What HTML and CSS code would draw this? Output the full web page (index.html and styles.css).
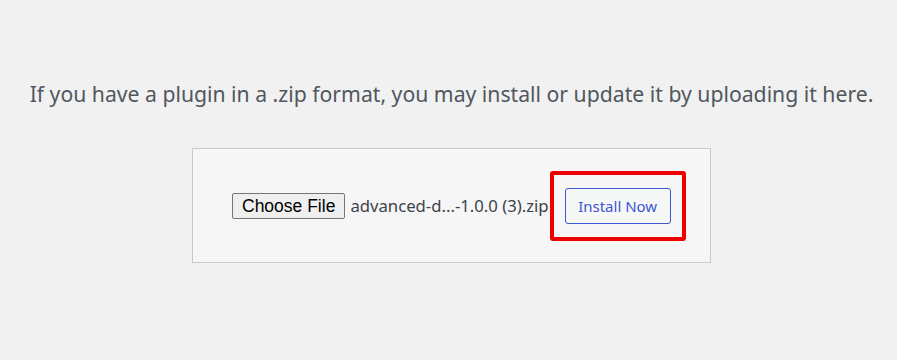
FILE: index.html
```html
<!DOCTYPE html>
<html lang="en">
<head>
  <meta charset="UTF-8">
  <title>Upload Plugin</title>
  <link rel="stylesheet" href="styles.css">
</head>
<body>
  <div class="upload-plugin">
    <p class="install-help">
      If you have a plugin in a .zip format, you may install or update it by uploading it here.
    </p>
    <form class="upload-form">
      <span class="file-button">Choose File</span>
      <span class="file-name">advanced-d...-1.0.0 (3).zip</span>
      <span class="highlight">
        <button type="button" class="install-button">Install Now</button>
      </span>
    </form>
  </div>
</body>
</html>
```

FILE: styles.css
```css
* {
  margin: 0;
  padding: 0;
  box-sizing: border-box;
}

body {
  background: #f1f1f1;
  font-family: 'Noto Sans', 'Open Sans', sans-serif;
  color: #50575e;
}

.upload-plugin {
  display: flex;
  flex-direction: column;
  align-items: center;
  padding: 78px 0 0 6px;
}

.install-help {
  font-size: 21.2px;
  line-height: 32px;
  white-space: nowrap;
}

.upload-form {
  margin-top: 38px;
  width: 519px;
  height: 115px;
  display: flex;
  align-items: center;
  padding: 0 0 0 39px;
  background: #f6f6f6;
  border: 1px solid #c9c9c9;
}

.file-button {
  font-family: 'Liberation Sans', Arial, sans-serif;
  font-size: 17.5px;
  color: #000;
  height: 26px;
  line-height: 24px;
  padding: 0 9px;
  background: #efefef;
  border: 1px solid #767676;
  border-radius: 2px;
}

.file-name {
  margin-left: 5px;
  font-size: 16.7px;
  color: #3c434a;
}

.highlight {
  position: relative;
  margin-left: 16px;
  display: inline-flex;
}

.highlight::after {
  content: "";
  position: absolute;
  top: -17px;
  bottom: -17px;
  left: -15px;
  right: -15px;
  border: 4px solid #ee0000;
  border-radius: 3px;
}

.install-button {
  font-family: 'Noto Sans', 'Open Sans', sans-serif;
  font-size: 15px;
  color: #3c56d6;
  background: #f6f7f7;
  border: 1px solid #3c56d6;
  border-radius: 3px;
  width: 106px;
  height: 36px;
}
```
